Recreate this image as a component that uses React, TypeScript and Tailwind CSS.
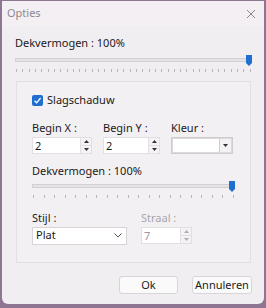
import React from 'react';

const font = { fontFamily: '"Noto Sans", "Open Sans", sans-serif' };

function Ticks({ count }: { count: number }) {
  return (
    <div className="flex justify-between h-[4px] px-[1px]">
      {Array.from({ length: count }).map((_, i) => (
        <div key={i} className="w-[1px] h-[3px] bg-[#b8b4b8]" />
      ))}
    </div>
  );
}

function Slider({ ticks }: { ticks: number }) {
  return (
    <div className="flex flex-col gap-[4px]">
      <div className="relative h-[10px] flex items-center">
        <div className="w-full h-[4px] bg-[#e6e3e6] border border-[#d3d0d3]" />
        {/* thumb */}
        <svg className="absolute right-0 top-0" width="6" height="11" viewBox="0 0 6 11">
          <path d="M0 0 H6 V8 L3 11 L0 8 Z" fill="#1f6fd1" />
        </svg>
      </div>
      <Ticks count={ticks} />
    </div>
  );
}

function Spin({ value, disabled }: { value: string; disabled?: boolean }) {
  return (
    <div
      className={`flex h-[17px] bg-white border ${disabled ? 'border-[#e2dfe2] text-[#9a979a]' : 'border-[#e2dfe2] text-[#1a1a1a]'}`}
    >
      <div className="flex-1 pl-[2px] text-[11px] leading-[15px]">{value}</div>
      <div className="w-[11px] flex flex-col border-l border-[#e2dfe2]">
        <div className="flex-1 flex items-center justify-center border-b border-[#e2dfe2] bg-[#f4f2f4]">
          <svg width="5" height="3" viewBox="0 0 5 3"><path d="M0 3 L2.5 0 L5 3 Z" fill={disabled ? '#b0adb0' : '#333'} /></svg>
        </div>
        <div className="flex-1 flex items-center justify-center bg-[#f4f2f4]">
          <svg width="5" height="3" viewBox="0 0 5 3"><path d="M0 0 L2.5 3 L5 0 Z" fill={disabled ? '#b0adb0' : '#333'} /></svg>
        </div>
      </div>
    </div>
  );
}

export default function App() {
  return (
    <div className="w-[266px] h-[308px] bg-[#8e7591] overflow-hidden" style={font}>
      <div className="ml-[2px] mt-[1px] w-[262px] h-[303px] bg-[#f1eef1] rounded-b-[6px] flex flex-col text-[#1a1a1a]">
        {/* title bar */}
        <div className="h-[25px] flex items-center justify-between pl-[5px] pr-[8px] bg-[#f3eff3]">
          <span className="text-[11px] text-[#8d8890]">Opties</span>
          <svg width="10" height="10" viewBox="0 0 10 10">
            <path d="M1 1 L9 9 M9 1 L1 9" stroke="#8a868c" strokeWidth="1" />
          </svg>
        </div>

        <div className="flex-1 flex flex-col pl-[13px] pr-[12px] pt-[10px]">
          <div className="text-[11px] leading-[14px] mb-[5px]">Dekvermogen : 100%</div>
          <Slider ticks={38} />

          {/* group box */}
          <div className="mt-[8px] ml-[1px] mr-[1px] h-[182px] border border-[#e3dfe3] bg-[#f3f0f3] px-[15px] pt-[10px] flex flex-col">
            <label className="flex items-center gap-[4px] text-[11px]">
              <span className="w-[11px] h-[11px] rounded-[2px] bg-[#1f6fd1] flex items-center justify-center">
                <svg width="9" height="9" viewBox="0 0 9 9">
                  <path d="M1.5 4.8 L3.6 6.8 L7.6 2" stroke="white" strokeWidth="1.3" fill="none" />
                </svg>
              </span>
              Slagschaduw
            </label>

            <div className="flex gap-[11px] mt-[12px]">
              <div className="w-[60px] flex flex-col gap-[2px]">
                <span className="text-[11px] leading-[14px]">Begin X :</span>
                <Spin value="2" />
              </div>
              <div className="w-[57px] flex flex-col gap-[2px]">
                <span className="text-[11px] leading-[14px]">Begin Y :</span>
                <Spin value="2" />
              </div>
              <div className="w-[62px] flex flex-col gap-[2px]">
                <span className="text-[11px] leading-[14px]">Kleur :</span>
                <div className="h-[17px] flex border border-[#cfcbcf] bg-[#dcd9dc] p-[1px]">
                  <div className="flex-1 bg-white" />
                  <div className="w-[12px] flex items-center justify-center bg-[#f4f2f4] border-l border-[#cfcbcf]">
                    <svg width="5" height="3" viewBox="0 0 5 3"><path d="M0 0 L2.5 3 L5 0 Z" fill="#333" /></svg>
                  </div>
                </div>
              </div>
            </div>

            <div className="text-[11px] leading-[14px] mt-[10px] mb-[3px]">Dekvermogen : 100%</div>
            <Slider ticks={20} />

            <div className="flex gap-[14px] mt-[12px]">
              <div className="w-[95px] flex flex-col gap-[2px]">
                <span className="text-[11px] leading-[14px]">Stijl :</span>
                <div className="h-[18px] flex items-center justify-between bg-white border border-[#d7d3d7] pl-[3px] pr-[4px]">
                  <span className="text-[11px]">Plat</span>
                  <svg width="8" height="5" viewBox="0 0 8 5"><path d="M0.5 0.5 L4 4 L7.5 0.5" stroke="#555" fill="none" /></svg>
                </div>
              </div>
              <div className="w-[51px] flex flex-col gap-[2px]">
                <span className="text-[11px] leading-[14px] text-[#a9a6aa]">Straal :</span>
                <Spin value="7" disabled />
              </div>
            </div>
          </div>

          <div className="flex justify-end gap-[14px] mt-[13px]">
            <button className="w-[59px] h-[18px] bg-[#fbfafb] border border-[#d8d4d8] rounded-[3px] text-[11px]">Ok</button>
            <button className="w-[60px] h-[18px] bg-[#fbfafb] border border-[#d8d4d8] rounded-[3px] text-[11px]">Annuleren</button>
          </div>
        </div>
      </div>
    </div>
  );
}
